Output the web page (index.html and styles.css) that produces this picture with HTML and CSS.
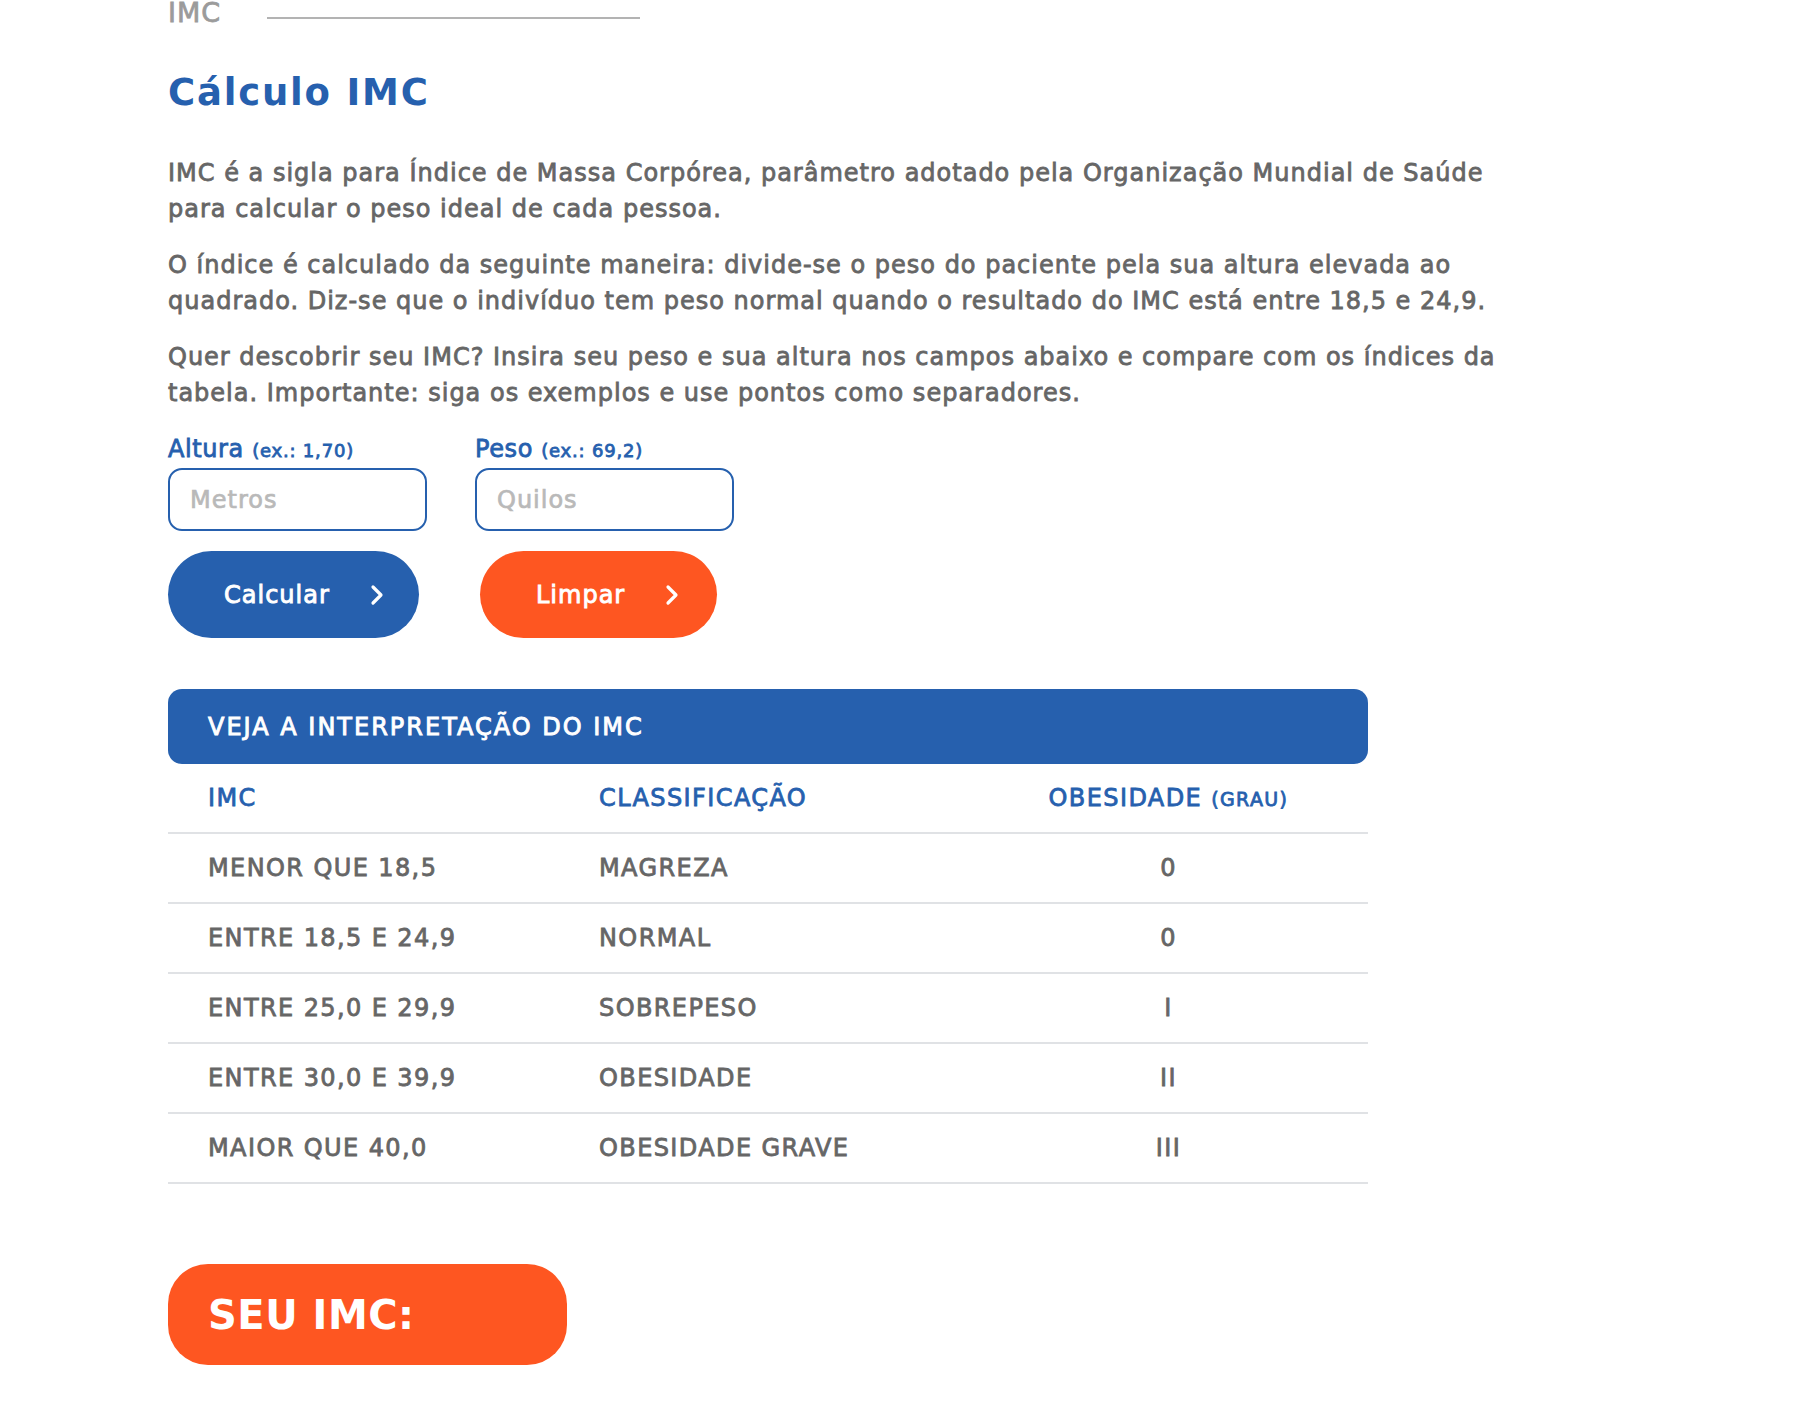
FILE: index.html
```html
<!DOCTYPE html>
<html lang="pt-BR">
<head>
<meta charset="utf-8">
<title>Cálculo IMC</title>
<link rel="stylesheet" href="styles.css">
</head>
<body>
<main class="page">
  <div class="crumb">
    <span class="crumb-text">IMC</span>
    <span class="crumb-line"></span>
  </div>

  <h1 class="title">Cálculo IMC</h1>

  <p class="text">IMC é a sigla para Índice de Massa Corpórea, parâmetro adotado pela Organização Mundial de Saúde para calcular o peso ideal de cada pessoa.</p>
  <p class="text">O índice é calculado da seguinte maneira: divide-se o peso do paciente pela sua altura elevada ao quadrado. Diz-se que o indivíduo tem peso normal quando o resultado do IMC está entre 18,5 e 24,9.</p>
  <p class="text">Quer descobrir seu IMC? Insira seu peso e sua altura nos campos abaixo e compare com os índices da tabela. Importante: siga os exemplos e use pontos como separadores.</p>

  <form class="imc-form">
    <div class="fields">
      <label class="field">
        <span class="field-label">Altura <small>(ex.: 1,70)</small></span>
        <input class="field-input" type="text" placeholder="Metros">
      </label>
      <label class="field">
        <span class="field-label">Peso <small>(ex.: 69,2)</small></span>
        <input class="field-input" type="text" placeholder="Quilos">
      </label>
    </div>
    <div class="actions">
      <button type="button" class="btn btn-blue">Calcular
        <svg class="chev" width="14" height="22" viewBox="0 0 14 22"><polyline points="3,3 11,11 3,19" fill="none" stroke="#fff" stroke-width="3.2" stroke-linecap="round" stroke-linejoin="round"/></svg>
      </button>
      <button type="button" class="btn btn-orange">Limpar
        <svg class="chev" width="14" height="22" viewBox="0 0 14 22"><polyline points="3,3 11,11 3,19" fill="none" stroke="#fff" stroke-width="3.2" stroke-linecap="round" stroke-linejoin="round"/></svg>
      </button>
    </div>
  </form>

  <section class="table">
    <div class="table-bar">VEJA A INTERPRETAÇÃO DO IMC</div>
    <div class="row row-head">
      <div class="cell">IMC</div>
      <div class="cell">CLASSIFICAÇÃO</div>
      <div class="cell cell-c">OBESIDADE <small>(GRAU)</small></div>
    </div>
    <div class="row">
      <div class="cell">MENOR QUE 18,5</div>
      <div class="cell">MAGREZA</div>
      <div class="cell cell-c">0</div>
    </div>
    <div class="row">
      <div class="cell">ENTRE 18,5 E 24,9</div>
      <div class="cell">NORMAL</div>
      <div class="cell cell-c">0</div>
    </div>
    <div class="row">
      <div class="cell">ENTRE 25,0 E 29,9</div>
      <div class="cell">SOBREPESO</div>
      <div class="cell cell-c">I</div>
    </div>
    <div class="row">
      <div class="cell">ENTRE 30,0 E 39,9</div>
      <div class="cell">OBESIDADE</div>
      <div class="cell cell-c">II</div>
    </div>
    <div class="row">
      <div class="cell">MAIOR QUE 40,0</div>
      <div class="cell">OBESIDADE GRAVE</div>
      <div class="cell cell-c">III</div>
    </div>
  </section>

  <div class="result">SEU IMC:</div>
</main>
</body>
</html>
```
FILE: styles.css
```css
* { box-sizing: border-box; }
html, body { margin: 0; padding: 0; background: #fff; }
body {
  font-family: "DejaVu Sans", "Open Sans", sans-serif;
  color: #666;
}
.page {
  padding: 0 0 40px 168px;
}
.crumb {
  display: flex;
  align-items: flex-start;
  gap: 46px;
  height: 28px;
}
.crumb-text {
  font-size: 27px;
  line-height: 28px;
  letter-spacing: 1px;
  color: #9b9b9b;
  -webkit-text-stroke-width: 0.8px;
  margin-top: -1px;
}
.crumb-line {
  display: block;
  width: 373px;
  height: 2px;
  background: #b3b3b3;
  margin-top: 17px;
}
.title {
  margin: 37px 0 34px;
  font-size: 37px;
  font-weight: 700;
  letter-spacing: 1.8px;
  color: #2660ae;
  line-height: 56px;
}
.text {
  margin: 0 0 20px;
  font-size: 24px;
  line-height: 36px;
  letter-spacing: 1px;
  max-width: 1350px;
  color: #666;
  -webkit-text-stroke-width: 0.8px;
}
.imc-form {
  margin-top: 22px;
}
.fields {
  display: flex;
  gap: 48px;
}
.field {
  display: flex;
  flex-direction: column;
  width: 259px;
}
.field-label {
  font-size: 24px;
  line-height: 32px;
  letter-spacing: 0.6px;
  color: #2660ae;
  -webkit-text-stroke-width: 0.8px;
  margin-bottom: 1px;
  white-space: nowrap;
}
.field-label small {
  font-size: 18px;
  letter-spacing: 0.8px;
}
.field-input {
  height: 63px;
  border: 2px solid #2660ae;
  border-radius: 14px;
  padding: 0 20px;
  font-family: inherit;
  font-size: 24px;
  letter-spacing: 1px;
  color: #b9b9b9;
  -webkit-text-stroke-width: 0.7px;
  outline: none;
}
.field-input::placeholder { color: #b9b9b9; }
.actions {
  display: flex;
  gap: 61px;
  margin-top: 20px;
}
.btn {
  display: flex;
  align-items: center;
  gap: 40px;
  height: 87px;
  padding: 0 32px 0 56px;
  border: 0;
  border-radius: 44px;
  font-family: inherit;
  font-size: 24px;
  letter-spacing: 1px;
  color: #fff;
  -webkit-text-stroke-width: 0.9px;
  cursor: pointer;
}
.btn-blue { background: #2660ae; width: 251px; }
.btn-orange { background: #fe5621; width: 237px; }
.chev { display: block; }
.table {
  width: 1200px;
  margin-top: 51px;
}
.table-bar {
  height: 75px;
  display: flex;
  align-items: center;
  padding-left: 40px;
  background: #2660ae;
  border-radius: 14px;
  color: #fff;
  font-size: 24px;
  letter-spacing: 2px;
  -webkit-text-stroke-width: 0.9px;
}
.row {
  display: grid;
  grid-template-columns: 391px 410px 1fr;
  height: 70px;
  align-items: center;
  border-bottom: 2px solid #e0e2e5;
  font-size: 24px;
  letter-spacing: 1.4px;
  color: #666;
  -webkit-text-stroke-width: 0.8px;
}
.row-head {
  color: #2660ae;
}
.row-head small { font-size: 19px; }
.cell { padding-left: 40px; }
.cell-c { padding-left: 0; text-align: center; }
.result {
  margin-top: 80px;
  width: 399px;
  height: 101px;
  border-radius: 40px;
  background: #fe5621;
  color: #fff;
  font-size: 40px;
  font-weight: 700;
  letter-spacing: 0.5px;
  display: flex;
  align-items: center;
  padding-left: 40px;
}
```
